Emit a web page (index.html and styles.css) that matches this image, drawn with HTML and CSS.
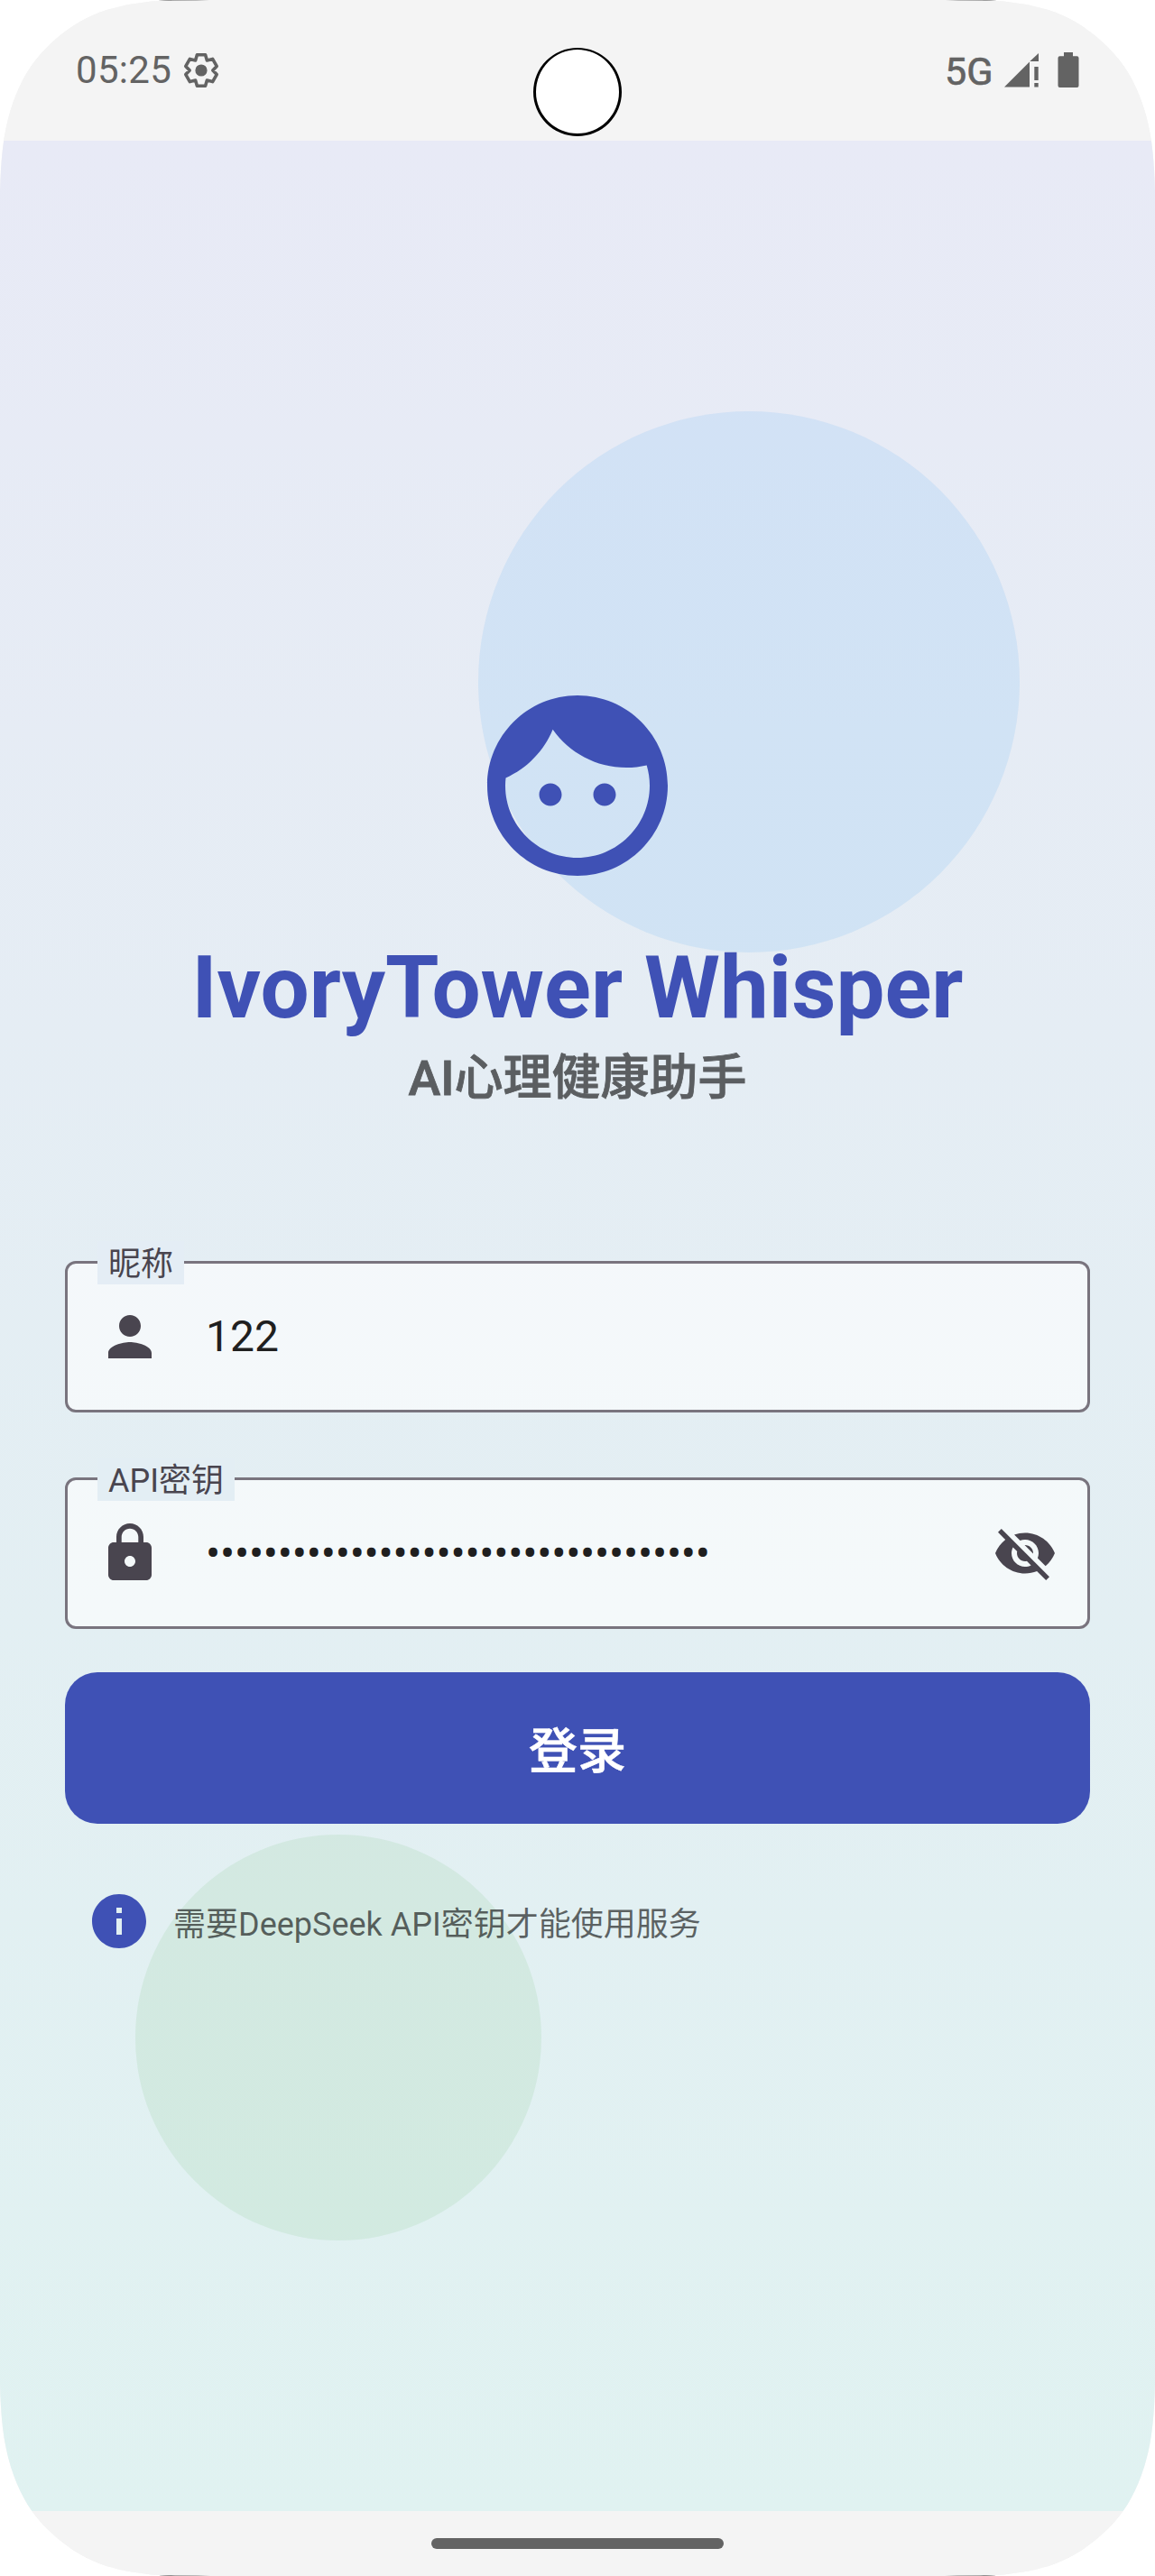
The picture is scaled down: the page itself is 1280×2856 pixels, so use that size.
FILE: index.html
```html
<!DOCTYPE html>
<html lang="zh-CN">
<head>
<meta charset="utf-8">
<title>IvoryTower Whisper</title>
<link rel="stylesheet" href="styles.css">
</head>
<body>
<div class="phone">
  <header class="status-bar">
    <div class="status-left">
      <span class="clock">05:25</span>
      <svg class="gear" viewBox="-20 -20 40 40"><path d="M-4.6-17.2H4.6L6.4-11.1 12.6-12.6 17.2-4.6 12.8 0 17.2 4.6 12.6 12.6 6.4 11.1 4.6 17.2H-4.6L-6.4 11.1-12.6 12.6-17.2 4.6-12.8 0-17.2-4.6-12.6-12.6-6.4-11.1z" fill="none" stroke="currentColor" stroke-width="3.6" stroke-linejoin="round"/><circle r="6.6" fill="currentColor"/></svg>
    </div>
    <div class="status-right">
      <span class="network">5G</span>
      <svg class="signal" viewBox="0 0 38 40"><path d="M0 38.5 28 10.5v28zM28.3 10 38 1v9zM33.3 16h4.4v15h-4.4zM33.3 34h4.4v4.5h-4.4z"/></svg>
      <svg class="battery" viewBox="0 0 24 40"><path d="M7 0h10v4.3h4.5a2 2 0 0 1 2 2V37a2 2 0 0 1-2 2h-19a2 2 0 0 1-2-2V6.300a2 2 0 0 1 2-2H7z"/></svg>
    </div>
    <span class="camera"></span>
  </header>

  <main class="screen">
    <span class="bubble bubble-blue"></span>
    <span class="bubble bubble-green"></span>

    <section class="hero">
      <svg class="face" viewBox="0 0 24 24"><path d="M9 11.750c-.69 0-1.250.56-1.250 1.250s.56 1.250 1.250 1.250 1.250-.56 1.250-1.250-.56-1.250-1.250-1.250zm6 0c-.69 0-1.250.56-1.250 1.250s.56 1.250 1.250 1.250 1.250-.56 1.250-1.250-.56-1.250-1.250-1.250zM12 2C6.480 2 2 6.480 2 12s4.480 10 10 10 10-4.480 10-10S17.520 2 12 2zm0 18c-4.410 0-8-3.590-8-8 0-.29.02-.58.05-.86 2.360-1.050 4.230-2.980 5.210-5.370C11.070 8.330 14.050 10 17.420 10c.78 0 1.530-.09 2.250-.26.21.71.33 1.470.33 2.260 0 4.410-3.590 8-8 8z"/></svg>
      <h1 class="title">IvoryTower Whisper</h1>
      <p class="subtitle">AI心理健康助手</p>
    </section>

    <form class="login">
      <div class="field">
        <span class="label">昵称</span>
        <svg class="icon" viewBox="0 0 24 24"><path d="M12 12c2.210 0 4-1.790 4-4s-1.790-4-4-4-4 1.790-4 4 1.790 4 4 4zm0 2c-2.670 0-8 1.340-8 4v2h16v-2c0-2.660-5.330-4-8-4z"/></svg>
        <span class="value">122</span>
      </div>
      <div class="field">
        <span class="label">API密钥</span>
        <svg class="icon" viewBox="0 0 24 24"><path d="M18 8h-1V6c0-2.760-2.240-5-5-5S7 3.240 7 6v2H6c-1.100 0-2 .9-2 2v10c0 1.100.9 2 2 2h12c1.100 0 2-.9 2-2V10c0-1.100-.9-2-2-2zm-6 9c-1.100 0-2-.9-2-2s.9-2 2-2 2 .9 2 2-.9 2-2 2zm3.100-9H8.900V6c0-1.710 1.390-3.100 3.100-3.100s3.100 1.390 3.100 3.100v2z"/></svg>
        <span class="value secret">•••••••••••••••••••••••••••••••••••</span>
        <svg class="icon" viewBox="0 0 24 24"><path d="M12 7c2.760 0 5 2.240 5 5 0 .65-.13 1.260-.36 1.830l2.920 2.920c1.510-1.260 2.700-2.890 3.430-4.750-1.730-4.390-6-7.500-11-7.500-1.400 0-2.740.25-3.980.7l2.160 2.160C10.740 7.130 11.350 7 12 7zM2 4.270l2.280 2.280.46.46C3.080 8.300 1.780 10.020 1 12c1.730 4.390 6 7.500 11 7.500 1.550 0 3.030-.3 4.380-.84l.42.42L19.730 22 21 20.730 3.270 3 2 4.270zM7.530 9.800l1.550 1.550c-.05.21-.08.43-.08.65 0 1.660 1.340 3 3 3 .22 0 .44-.03.65-.08l1.550 1.550c-.67.33-1.410.53-2.200.53-2.760 0-5-2.240-5-5 0-.79.2-1.530.53-2.200zm4.310-.78l3.150 3.150.02-.16c0-1.660-1.340-3-3-3l-.17.01z"/></svg>
      </div>
      <button class="submit" type="button">登录</button>
    </form>

    <div class="hint">
      <svg class="info" viewBox="0 0 24 24"><path d="M12 2C6.480 2 2 6.480 2 12s4.480 10 10 10 10-4.480 10-10S17.520 2 12 2zm1 15h-2v-6h2v6zm0-8h-2V7h2v2z"/></svg>
      <span class="hint-text">需要DeepSeek API密钥才能使用服务</span>
    </div>
  </main>

  <footer class="nav-bar"><span class="handle"></span></footer>
</div>
</body>
</html>
```
FILE: styles.css
```css
* { box-sizing: border-box; }
body {
  margin: 0;
  background: #fff;
  font-family: Roboto, "Noto Sans CJK SC", sans-serif;
}
svg { display: block; flex: none; fill: currentColor; }

.phone {
  display: flex;
  flex-direction: column;
  width: 1280px;
  height: 2856px;
  border-radius: 178px;
  overflow: hidden;
  background: #f4f4f4;
  clip-path: path("M0 212C1 178 3 150 12 121C26 76 50 49 79 29C112 8 150 2 190 0H1090C1130 2 1168 8 1201 29C1230 49 1254 76 1268 121C1277 150 1279 178 1280 212V2644C1279 2678 1277 2706 1268 2735C1254 2780 1230 2807 1201 2827C1168 2848 1130 2854 1090 2856H190C150 2854 112 2848 79 2827C50 2807 26 2780 12 2735C3 2706 1 2678 0 2644Z");
}

/* Status bar */
.status-bar {
  position: relative;
  flex: none;
  display: flex;
  justify-content: space-between;
  align-items: flex-start;
  height: 156px;
  padding: 58px 84px 0 84px;
  color: #636363;
  background:
    linear-gradient(90deg, #222, #aaa 30%, #bbb 75%, #f4f4f4) 174px 0 / 58px 1px no-repeat,
    linear-gradient(270deg, #222, #aaa 30%, #bbb 75%, #f4f4f4) 1048px 0 / 58px 1px no-repeat,
    #f4f4f4;
}
.status-left, .status-right { display: flex; align-items: center; height: 40px; }
.clock { width: 119px; font-size: 42px; line-height: 40px; letter-spacing: 0.3px; }
.gear { width: 40px; height: 40px; }
.network {
  width: 66px;
  padding-top: 2px;
  font-size: 43px;
  line-height: 40px;
  font-weight: 400;
  -webkit-text-stroke: 0.7px #636363;
}
.signal { width: 38px; height: 40px; margin-right: 21px; }
.battery { width: 24px; height: 40px; }
.camera {
  position: absolute;
  left: 591px;
  top: 53px;
  width: 98px;
  height: 98px;
  border: solid #000;
  border-width: 2px 3px 3px;
  border-radius: 50%;
  background: #fff;
}

/* Screen */
.screen {
  position: relative;
  flex: 1;
  display: flex;
  flex-direction: column;
  padding: 595px 72px 0;
  background: linear-gradient(180deg, #e8eaf6, #e0f2f1);
}
.bubble { position: absolute; border-radius: 50%; }
.bubble-blue { left: 530px; top: 300px; width: 600px; height: 600px; background: rgba(33, 150, 243, 0.1); }
.bubble-green { left: 150px; top: 1878px; width: 450px; height: 450px; background: rgba(76, 175, 80, 0.1); }
.hero, .login, .hint { position: relative; }

.hero { display: flex; flex-direction: column; align-items: center; }
.face { width: 240px; height: 240px; color: #3f51b5; }
.title {
  margin: 44px 0 0;
  font-size: 96px;
  line-height: 120px;
  font-weight: 700;
  color: #3f51b5;
  white-space: nowrap;
}
.subtitle {
  margin: 5px 0 0;
  font-size: 54px;
  line-height: 72px;
  font-weight: 500;
  color: #5b5e61;
  -webkit-text-stroke: 0.8px #5b5e61;
}

/* Login form */
.login { display: flex; flex-direction: column; margin-top: 166px; }
.field {
  position: relative;
  display: flex;
  align-items: center;
  height: 168px;
  margin-bottom: 72px;
  padding: 0 33px;
  border: 3px solid #79747e;
  border-radius: 12px;
  background: rgba(255, 255, 255, 0.6);
  background-clip: padding-box;
}
.field + .field { margin-bottom: 48px; }
.label {
  position: absolute;
  left: 33px;
  top: -25px;
  height: 48px;
  padding: 0 12px;
  font-size: 36px;
  line-height: 53px;
  color: #49454f;
  background: #e4edf5;
}
.field + .field .label { background: #e3eef4; }
.icon { width: 72px; height: 72px; color: #49454f; }
.value {
  flex: 1;
  margin-left: 48px;
  font-size: 48px;
  line-height: 72px;
  color: #1f1f1f;
}
.secret { padding-top: 2px; white-space: nowrap; letter-spacing: -0.23px; }
.submit {
  height: 168px;
  padding: 9px 0 0;
  border: 0;
  border-radius: 36px;
  font: 500 54px/72px Roboto, "Noto Sans CJK SC", sans-serif;
  color: #fff;
  background: #3f51b5;
  -webkit-text-stroke: 0.6px #fff;
}

.hint { display: flex; align-items: center; margin: 72px 24px 0; }
.info { width: 72px; height: 72px; color: #3f51b5; }
.hint-text {
  margin-left: 24px;
  padding-top: 7px;
  font-size: 36px;
  line-height: 48px;
  color: rgba(0, 0, 0, 0.6);
}

/* Gesture navigation */
.nav-bar {
  flex: none;
  height: 72px;
  padding-top: 30px;
  background:
    linear-gradient(90deg, #333, #aaa 30%, #bbb 75%, #f4f4f4) 177px 100% / 56px 1px no-repeat,
    linear-gradient(270deg, #333, #aaa 30%, #bbb 75%, #f4f4f4) 1047px 100% / 56px 1px no-repeat,
    #f4f4f4;
}
.handle {
  display: block;
  width: 324px;
  height: 12px;
  margin: 0 auto;
  border-radius: 6px;
  background: #636363;
}
```
